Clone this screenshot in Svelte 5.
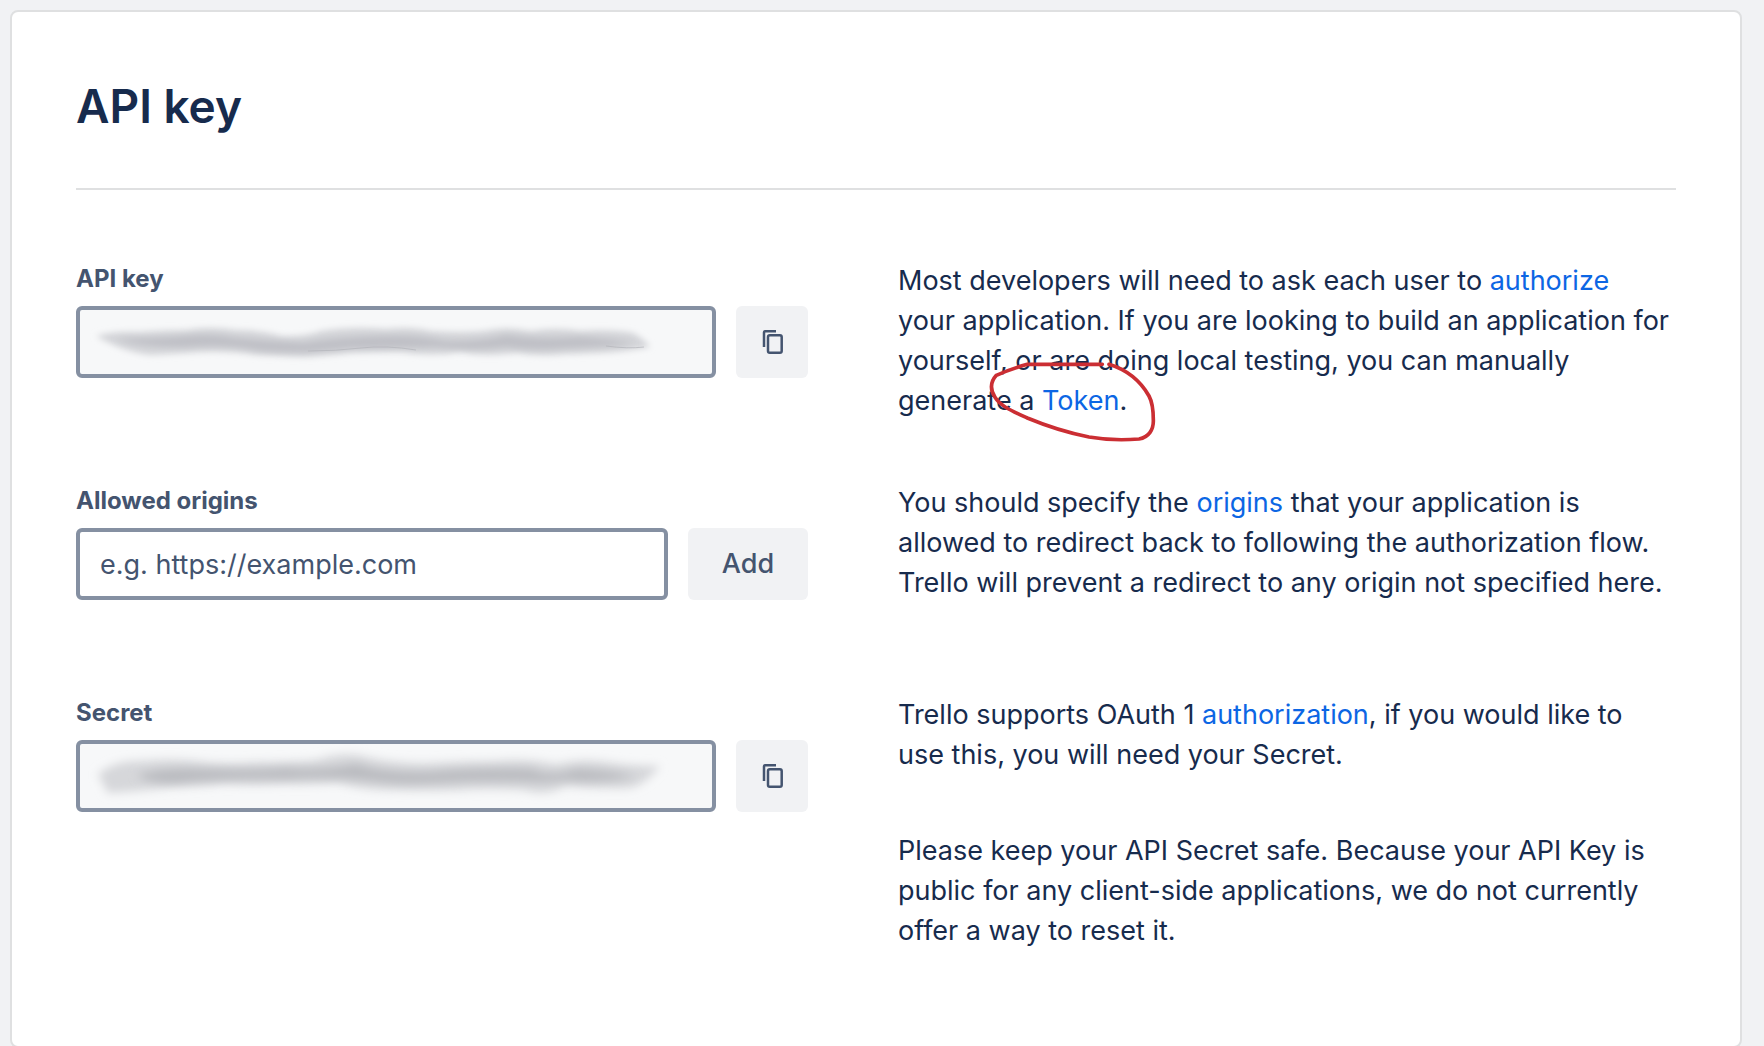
<script>
  let origin = $state('');
</script>

{#snippet copyIcon()}
  <svg class="icon" viewBox="0 0 24 24" aria-hidden="true">
    <path d="M4 17V2.6Q4 1.2 5.4 1.2H16" />
    <rect x="8" y="5.3" width="13.7" height="17.4" rx="1.8" />
  </svg>
{/snippet}

<main class="card">
  <h1>API key</h1>

  <section class="row">
    <div class="field">
      <label for="api-key">API key</label>
      <div class="controls">
        <div class="masked">
          <input id="api-key" class="readonly" type="text" readonly />
          <svg class="smudge" viewBox="0 0 640 72" preserveAspectRatio="none" aria-hidden="true">
            <defs>
              <filter id="soft" x="-5%" y="-50%" width="110%" height="200%"><feGaussianBlur stdDeviation="3" /></filter>
            </defs>
            <path
              filter="url(#soft)"
              fill="#d3d4d8"
              d="M20 30Q40 25 62 26Q90 24 110 24Q135 20 160 24Q185 24 205 30Q230 31 245 25Q275 20 310 23Q335 20 355 25Q385 27 408 25Q430 20 455 25Q480 21 505 25Q535 23 557 27Q568 33 574 41Q550 45 538 46Q505 48 490 48Q465 51 440 47Q405 51 385 46Q355 51 325 46Q300 46 275 47Q245 50 228 51Q200 50 180 49Q155 45 125 46Q95 48 75 49Q50 47 20 30Z"
            />
            <path
              filter="url(#soft)"
              fill="#bfc0c6"
              d="M40 33Q80 33 110 30Q135 27 160 32Q190 35 228 37Q260 31 310 30Q340 29 370 35Q405 36 430 29Q460 34 505 31Q535 33 558 37Q535 41 490 42Q460 45 430 41Q400 45 360 41Q320 42 275 42Q245 45 228 46Q195 46 180 44Q150 38 110 41Q70 42 40 33Z"
            />
            <path class="crease" d="M232 45Q260 45 285 42T340 44" />
            <path class="crease" d="M530 40Q552 43 568 41" />
          </svg>
        </div>
        <button class="btn square" type="button" aria-label="Copy API key">{@render copyIcon()}</button>
      </div>
    </div>
    <div class="help">
      <p>
        Most developers will need to ask each user to <a href="#authorize">authorize</a><br />
        your application. If you are looking to build an application for<br />
        yourself, or are doing local testing, you can manually<br />
        generate a <span class="marked"><a href="#token">Token</a><svg class="loop" viewBox="0 0 660 360" aria-hidden="true">
            <path
              d="M430 73H205C165 84 140 93 112 106C92 128 94 150 108 172C124 198 155 211 205 234C265 259 330 279 390 291C430 298 490 301 540 297C570 292 584 268 583 240C583 215 582 190 570 168C546 126 505 90 450 73"
            />
          </svg></span>.
      </p>
    </div>
  </section>

  <section class="row origins">
    <div class="field">
      <label for="origin">Allowed origins</label>
      <div class="controls">
        <input id="origin" type="text" placeholder="e.g. https://example.com" bind:value={origin} />
        <button class="btn add" type="button">Add</button>
      </div>
    </div>
    <div class="help">
      <p>
        You should specify the <a href="#origins">origins</a> that your application is<br />
        allowed to redirect back to following the authorization flow.<br />
        Trello will prevent a redirect to any origin not specified here.
      </p>
    </div>
  </section>

  <section class="row">
    <div class="field">
      <label for="secret">Secret</label>
      <div class="controls">
        <div class="masked">
          <input id="secret" class="readonly" type="text" readonly />
          <svg class="smudge" viewBox="0 0 640 72" preserveAspectRatio="none" aria-hidden="true">
            <defs>
              <filter id="softer" x="-5%" y="-60%" width="110%" height="220%"><feGaussianBlur stdDeviation="5" /></filter>
            </defs>
            <path
              filter="url(#softer)"
              fill="#d6d7da"
              d="M22 34Q40 20 65 21Q95 18 120 21Q150 25 180 22Q215 22 240 20Q270 11 290 17Q320 24 355 23Q390 21 420 21Q450 18 480 24Q505 18 530 22Q555 26 584 26Q568 46 552 48Q520 49 490 46Q470 57 448 50Q410 48 385 50Q350 51 315 50Q285 50 262 43Q235 45 210 44Q180 46 150 44Q125 47 100 47Q65 51 32 53Z"
            />
            <path
              filter="url(#softer)"
              fill="#babbc0"
              d="M60 35Q90 27 125 29Q180 31 210 28Q245 31 280 24Q310 34 355 32Q400 28 455 29Q475 38 500 29Q530 30 560 36Q530 43 490 40Q465 43 448 41Q400 40 370 42Q320 45 290 40Q250 36 210 39Q150 38 100 43Q75 44 60 35Z"
            />
          </svg>
        </div>
        <button class="btn square" type="button" aria-label="Copy secret">{@render copyIcon()}</button>
      </div>
    </div>
    <div class="help">
      <p>
        Trello supports OAuth 1 <a href="#authorization">authorization</a>, if you would like to<br />
        use this, you will need your Secret.
      </p>
      <p>
        Please keep your API Secret safe. Because your API Key is<br />
        public for any client-side applications, we do not currently<br />
        offer a way to reset it.
      </p>
    </div>
  </section>
</main>

<style>
  :global(body) {
    background: #f1f2f4;
  }
  .card,
  .card * {
    box-sizing: border-box;
  }
  .card {
    margin: 10px 22px 0 10px;
    padding: 64px 64px 95px;
    border: 2px solid #dfe0e1;
    border-radius: 8px;
    background: #fff;
    color: #172b4d;
    font: 400 27px/40px Inter, 'Noto Sans', sans-serif;
  }
  h1 {
    margin: 0 0 70px;
    padding-bottom: 52px;
    border-bottom: 2px solid #dfe0e1;
    font-size: 46px;
    line-height: 60px;
    font-weight: 600;
  }
  .row {
    display: grid;
    grid-template-columns: 732fr 778fr;
    column-gap: 90px;
  }
  .row + .row {
    margin-top: 61px;
  }
  .origins {
    padding-bottom: 30px;
  }
  label {
    display: block;
    padding-bottom: 8px;
    color: #44546f;
    font-size: 24px;
    line-height: 38px;
    font-weight: 700;
  }
  .controls {
    display: flex;
    gap: 20px;
  }
  .masked {
    position: relative;
    display: flex;
    flex: 1;
  }
  input {
    flex: 1;
    min-width: 0;
    height: 72px;
    padding: 0 20px;
    border: 4px solid #8590a2;
    border-radius: 6px;
    background: #fff;
    color: #172b4d;
    font: inherit;
  }
  input::placeholder {
    color: #44546f;
    opacity: 1;
  }
  .readonly {
    background: #f7f8f9;
  }
  .smudge {
    position: absolute;
    inset: 0;
    width: 100%;
    height: 100%;
    pointer-events: none;
  }
  .crease {
    fill: none;
    stroke: #b4b5ba;
    stroke-width: 1;
    opacity: 0.7;
  }
  .btn {
    display: flex;
    align-items: center;
    justify-content: center;
    height: 72px;
    padding: 0;
    border: 0;
    border-radius: 6px;
    background: #f1f2f4;
    color: #44546f;
    font: inherit;
    font-weight: 500;
  }
  .square {
    width: 72px;
  }
  .add {
    width: 120px;
  }
  .icon {
    width: 24px;
    height: 24px;
    fill: none;
    stroke: currentColor;
    stroke-width: 2.5;
  }
  .help {
    padding-top: 1px;
    white-space: nowrap;
  }
  p {
    margin: 0;
  }
  p + p {
    margin-top: 56px;
  }
  a {
    color: #0c66e4;
    text-decoration: none;
  }
  .marked {
    position: relative;
    display: inline-block;
  }
  .loop {
    position: absolute;
    left: -83px;
    top: -41px;
    width: 220px;
    height: 120px;
    fill: none;
    stroke: #cb2e33;
    stroke-width: 11;
    stroke-linecap: round;
    pointer-events: none;
  }
</style>
